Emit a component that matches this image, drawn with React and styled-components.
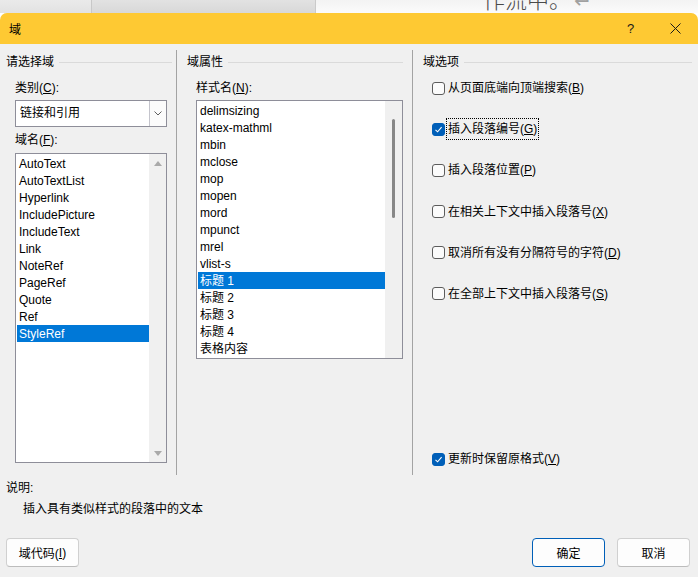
import React from 'react';
import styled, { createGlobalStyle } from 'styled-components';

const FONT = `"Liberation Sans", "Noto Sans CJK SC", sans-serif`;

const GlobalStyle = createGlobalStyle`
  html, body {
    margin: 0;
    padding: 0;
  }
  body {
    width: 698px;
    height: 577px;
    overflow: hidden;
    background: #fff;
    font-family: ${FONT};
    font-size: 12px;
    color: #000;
  }
`;

const Screen = styled.div`
  display: flex;
  flex-direction: column;
  width: 698px;
  height: 577px;
  overflow: hidden;
`;

/* word document peeking out above the dialog */
const DocStrip = styled.div`
  display: flex;
  height: 13px;
  flex-shrink: 0;
`;

const DocGutter = styled.div`
  width: 91px;
  background: linear-gradient(#eaeaea, #e2e2e2);
  border-right: 1px solid #c8c8c8;
`;

const DocRuler = styled.div`
  width: 223px;
  background: linear-gradient(#e2e2e2, #d8d8d8);
  border-right: 1px solid #cacaca;
`;

const DocPage = styled.div`
  flex: 1;
  display: flex;
  align-items: flex-start;
  padding-left: 167px;
  overflow: hidden;
  background: linear-gradient(#f3f3f3, #fbfbfb);
`;

const DocText = styled.div`
  margin-top: -10px;
  font-family: "Liberation Serif", "Noto Sans CJK SC", serif;
  font-size: 22px;
  font-weight: 300;
  line-height: 22px;
  color: #4a4a4a;
  white-space: nowrap;

  span {
    color: #a0a0a0;
    margin-left: 3px;
  }
`;

const Dialog = styled.div`
  flex: 1;
  display: flex;
  flex-direction: column;
  background: #f0f0f0;
  border-radius: 7px 7px 0 0;
  overflow: hidden;
`;

const TitleBar = styled.div`
  display: flex;
  align-items: center;
  height: 31px;
  flex-shrink: 0;
  padding-left: 9px;
  background: #fec933;
`;

const Title = styled.div`
  flex: 1;
  font-size: 12px;
`;

const TitleButton = styled.div`
  width: 45px;
  height: 31px;
  display: flex;
  align-items: center;
  justify-content: center;
  font-size: 13px;
  color: #1a1a1a;
`;

const Columns = styled.div`
  display: flex;
  height: 425px;
  margin-top: 6px;
  flex-shrink: 0;
`;

const Column = styled.div`
  display: flex;
  flex-direction: column;
  box-sizing: border-box;
  width: ${(p) => (p.$width ? `${p.$width}px` : 'auto')};
  flex: ${(p) => (p.$width ? 'none' : '1')};
  padding-left: ${(p) => p.$inset}px;
  padding-bottom: 6px;
  border-right: ${(p) => (p.$divider ? '1px solid #a3a3a3' : 'none')};
`;

const GroupHeading = styled.div`
  display: flex;
  align-items: center;
  gap: 5px;
  height: 16px;
  line-height: 16px;
  margin-top: 4px;
  margin-left: ${(p) => p.$shift}px;
  margin-right: ${(p) => p.$trail}px;

  &::after {
    content: '';
    flex: 1;
    height: 1px;
    background: #dadada;
  }
`;

const FieldLabel = styled.div`
  line-height: 16px;
  margin-top: ${(p) => p.$gap}px;
`;

const Dropdown = styled.div`
  display: flex;
  width: 152px;
  height: 27px;
  box-sizing: border-box;
  margin-top: 4px;
  border: 1px solid #8e8e99;
  background: #fff;
`;

const DropValue = styled.div`
  flex: 1;
  padding-left: 4px;
  line-height: 25px;
`;

const DropButton = styled.div`
  width: 16px;
  display: flex;
  align-items: center;
  justify-content: center;
  border-left: 1px solid #c4c4cc;
  background: #fbfbfb;
`;

const ListBox = styled.div`
  display: flex;
  width: ${(p) => p.$w}px;
  height: ${(p) => p.$h}px;
  box-sizing: border-box;
  margin-top: ${(p) => p.$gap}px;
  border: 1px solid #8e8e99;
  background: #fff;
`;

const ListItems = styled.div`
  flex: 1;
  padding: 1px 0 0 1px;
  overflow: hidden;
`;

const ListItem = styled.div`
  height: 17px;
  line-height: 18px;
  padding-left: 2px;
  white-space: nowrap;
  background: ${(p) => (p.$selected ? '#0078d7' : 'transparent')};
  color: ${(p) => (p.$selected ? '#fff' : '#000')};
`;

const ScrollTrack = styled.div`
  width: 17px;
  flex-shrink: 0;
  display: flex;
  flex-direction: column;
  align-items: center;
  justify-content: ${(p) => (p.$arrows ? 'space-between' : 'flex-start')};
  padding: ${(p) => (p.$arrows ? '7px 0 6px' : '0')};
  box-sizing: border-box;
  background: #f0f0f0;
`;

const Arrow = styled.div`
  width: 0;
  height: 0;
  border-left: 4px solid transparent;
  border-right: 4px solid transparent;
  border-${(p) => (p.$down ? 'top' : 'bottom')}: 5px solid #a9a9a9;
`;

const Thumb = styled.div`
  width: 3px;
  height: 99px;
  margin-top: 18px;
  border-radius: 2px;
  background: #878787;
`;

const CheckList = styled.div`
  display: flex;
  flex-direction: column;
  gap: 21.2px;
  margin-top: 8px;
`;

const CheckRow = styled.div`
  display: flex;
  align-items: center;
  gap: 2px;
  height: 20px;
  margin-top: ${(p) => (p.$bottom ? 'auto' : '0')};
`;

const Box = styled.div`
  width: 13px;
  height: 13px;
  box-sizing: border-box;
  border-radius: 3px;
  display: flex;
  align-items: center;
  justify-content: center;
  border: 1px solid ${(p) => (p.$checked ? '#005fb8' : '#5c5c5c')};
  background: ${(p) => (p.$checked ? '#005fb8' : '#fbfbfb')};
`;

const CheckLabel = styled.span`
  padding: 2px 1px;
  line-height: 16px;
  white-space: nowrap;
  outline: ${(p) => (p.$focused ? '1px dotted #000' : 'none')};
`;

const Note = styled.div`
  line-height: 16px;
  margin-top: 5px;
  padding-left: ${(p) => p.$inset}px;
`;

const ButtonRow = styled.div`
  display: flex;
  align-items: center;
  margin-top: 21px;
  padding: 0 8px 0 6px;
`;

const Spacer = styled.div`
  flex: 1;
`;

const Button = styled.div`
  width: 73px;
  height: 29px;
  box-sizing: border-box;
  display: flex;
  align-items: center;
  justify-content: center;
  margin-left: ${(p) => p.$gap || 0}px;
  border-radius: 4px;
  background: #fdfdfd;
  border: 1px solid ${(p) => (p.$primary ? '#005fb8' : '#d0d0d0')};
  border-bottom-color: ${(p) => (p.$primary ? '#005fb8' : '#bcbcbc')};
`;

const fieldNames = [
  'AutoText',
  'AutoTextList',
  'Hyperlink',
  'IncludePicture',
  'IncludeText',
  'Link',
  'NoteRef',
  'PageRef',
  'Quote',
  'Ref',
  'StyleRef',
];

const styleNames = [
  'delimsizing',
  'katex-mathml',
  'mbin',
  'mclose',
  'mop',
  'mopen',
  'mord',
  'mpunct',
  'mrel',
  'vlist-s',
  '标题 1',
  '标题 2',
  '标题 3',
  '标题 4',
  '表格内容',
];

const options = [
  { text: '从页面底端向顶端搜索', key: 'B' },
  { text: '插入段落编号', key: 'G', checked: true, focused: true },
  { text: '插入段落位置', key: 'P' },
  { text: '在相关上下文中插入段落号', key: 'X' },
  { text: '取消所有没有分隔符号的字符', key: 'D' },
  { text: '在全部上下文中插入段落号', key: 'S' },
];

function Check() {
  return (
    <svg width="9" height="9" viewBox="0 0 9 9">
      <path d="M1.5 4.8 L3.6 6.8 L7.6 2.2" fill="none" stroke="#fff" strokeWidth="1.1" />
    </svg>
  );
}

function Option({ text, hotkey, checked, focused, bottom }) {
  return (
    <CheckRow $bottom={bottom}>
      <Box $checked={checked}>{checked && <Check />}</Box>
      <CheckLabel $focused={focused}>
        {text}(<u>{hotkey}</u>)
      </CheckLabel>
    </CheckRow>
  );
}

export default function App() {
  return (
    <>
      <GlobalStyle />
      <Screen>
        <DocStrip>
          <DocGutter />
          <DocRuler />
          <DocPage>
            <DocText>
              作流中。<span>↵</span>
            </DocText>
          </DocPage>
        </DocStrip>

        <Dialog>
          <TitleBar>
            <Title>域</Title>
            <TitleButton>?</TitleButton>
            <TitleButton>
              <svg width="11" height="11" viewBox="0 0 11 11">
                <path d="M0.5 0.5 L10.5 10.5 M10.5 0.5 L0.5 10.5" stroke="#1a1a1a" strokeWidth="1" />
              </svg>
            </TitleButton>
          </TitleBar>

          <Columns>
            <Column $width={177} $inset={15} $divider>
              <GroupHeading $shift={-9} $trail={4}>请选择域</GroupHeading>
              <FieldLabel $gap={10}>
                类别(<u>C</u>):
              </FieldLabel>
              <Dropdown>
                <DropValue>链接和引用</DropValue>
                <DropButton>
                  <svg width="8" height="5" viewBox="0 0 8 5">
                    <path d="M0.5 0.5 L4 4 L7.5 0.5" fill="none" stroke="#5f5f5f" strokeWidth="1" />
                  </svg>
                </DropButton>
              </Dropdown>
              <FieldLabel $gap={5}>
                域名(<u>F</u>):
              </FieldLabel>
              <ListBox $w={152} $h={310} $gap={5}>
                <ListItems>
                  {fieldNames.map((n) => (
                    <ListItem key={n} $selected={n === 'StyleRef'}>
                      {n}
                    </ListItem>
                  ))}
                </ListItems>
                <ScrollTrack $arrows>
                  <Arrow />
                  <Arrow $down />
                </ScrollTrack>
              </ListBox>
            </Column>

            <Column $width={236} $inset={19} $divider>
              <GroupHeading $shift={-9} $trail={9}>域属性</GroupHeading>
              <FieldLabel $gap={10}>
                样式名(<u>N</u>):
              </FieldLabel>
              <ListBox $w={207} $h={259} $gap={4}>
                <ListItems>
                  {styleNames.map((n) => (
                    <ListItem key={n} $selected={n === '标题 1'}>
                      {n}
                    </ListItem>
                  ))}
                </ListItems>
                <ScrollTrack>
                  <Thumb />
                </ScrollTrack>
              </ListBox>
            </Column>

            <Column $inset={19}>
              <GroupHeading $shift={-9} $trail={6}>域选项</GroupHeading>
              <CheckList>
                {options.map((o) => (
                  <Option
                    key={o.key}
                    text={o.text}
                    hotkey={o.key}
                    checked={o.checked}
                    focused={o.focused}
                  />
                ))}
              </CheckList>
              <Option text="更新时保留原格式" hotkey="V" checked bottom />
            </Column>
          </Columns>

          <Note $inset={6}>说明:</Note>
          <Note $inset={23}>插入具有类似样式的段落中的文本</Note>

          <ButtonRow>
            <Button>
              域代码(<u>I</u>)
            </Button>
            <Spacer />
            <Button $primary>确定</Button>
            <Button $gap={12}>取消</Button>
          </ButtonRow>
        </Dialog>
      </Screen>
    </>
  );
}
